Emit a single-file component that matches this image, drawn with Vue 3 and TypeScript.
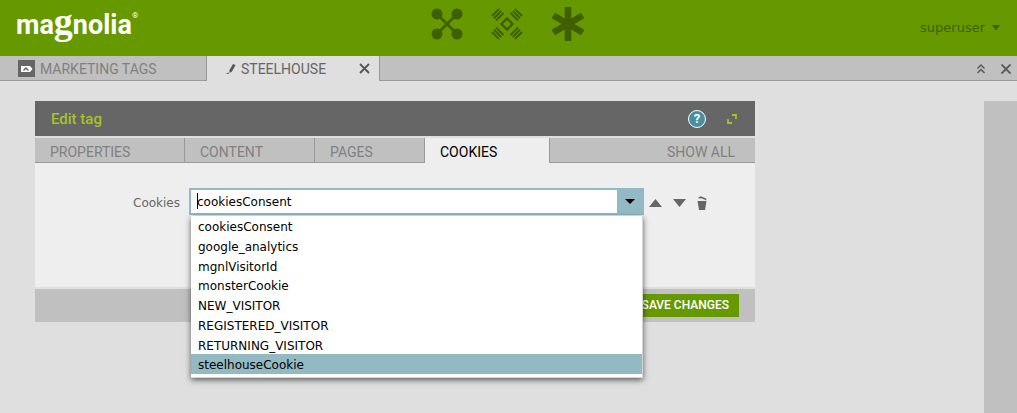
<script setup lang="ts">
import { ref } from 'vue'

const dialogTabs = ref([
  { label: 'PROPERTIES', kind: 'properties' },
  { label: 'CONTENT', kind: 'content' },
  { label: 'PAGES', kind: 'pages' },
  { label: 'COOKIES', kind: 'cookies' },
])
const activeTab = ref('cookies')

const cookies: string[] = [
  'cookiesConsent',
  'google_analytics',
  'mgnlVisitorId',
  'monsterCookie',
  'NEW_VISITOR',
  'REGISTERED_VISITOR',
  'RETURNING_VISITOR',
  'steelhouseCookie',
]
const value = ref('cookiesConsent')
const highlighted = ref('steelhouseCookie')
const open = ref(true)

function choose(name: string) {
  value.value = name
  open.value = false
}
</script>

<template>
  <div class="shell">
    <header class="topbar">
      <a class="logo" href="#" aria-label="magnolia"><span>ma</span><span class="logo-g">g</span><span>nolia</span><sup>®</sup></a>
      <nav class="launchers">
        <button type="button" aria-label="Apps">
          <svg width="32" height="32" viewBox="0 0 32 32">
            <g fill="#3f5f00">
              <circle cx="6" cy="6" r="5.5" /><circle cx="26" cy="6" r="5.5" />
              <circle cx="6" cy="26" r="5.5" /><circle cx="26" cy="26" r="5.5" />
            </g>
            <path d="M6 6L26 26M26 6L6 26" stroke="#3f5f00" stroke-width="2.600" />
          </svg>
        </button>
        <button type="button" aria-label="Pulse">
          <svg width="32" height="32" viewBox="0 0 32 32" fill="none" stroke="#3f5f00" stroke-width="2">
            <path d="M16 10.500L21.500 16L16 21.500L10.500 16Z" stroke-width="2.400" />
            <path d="M1 8L8 1M3 10.200L10.200 3M5 12.500L12.500 5" />
            <path d="M24 1L31 8M21.800 3L29 10.200M19.500 5L27 12.500" />
            <path d="M1 24L8 31M3 21.800L10.200 29M5 19.500L12.500 27" />
            <path d="M31 24L24 31M29 21.800L21.800 29M27 19.500L19.500 27" />
          </svg>
        </button>
        <button type="button" aria-label="Favorites">
          <svg width="34" height="34" viewBox="0 0 34 34" stroke="#3f5f00" stroke-width="6.600">
            <path d="M17 0V34M2.300 8.500L31.700 25.500M31.700 8.500L2.300 25.500" />
          </svg>
        </button>
      </nav>
      <button type="button" class="user">
        superuser
        <svg width="8" height="6" viewBox="0 0 8 6"><path d="M0 0H8L4 5.500Z" fill="#3f5f00" /></svg>
      </button>
    </header>

    <nav class="appbar">
      <button type="button" class="apptab tags">
        <svg width="17" height="17" viewBox="0 0 17 17">
          <rect width="17" height="17" fill="#666" />
          <path d="M3 6H12L14.500 9L12 12H3Z" fill="#fff" />
          <path d="M5.500 10.500L8 8L10.500 10.500" fill="none" stroke="#666" stroke-width="1.500" />
        </svg>
        MARKETING TAGS
      </button>
      <div class="apptab current">
        <button type="button" class="apptab-name">
          <svg width="11" height="12" viewBox="0 0 11 12">
            <path d="M8 1L10.500 2L7 8.500L4.500 10L4.500 7Z" fill="#555" />
            <path d="M0 11H4L3.500 9L2.500 10Z" fill="#777" />
          </svg>
          STEELHOUSE
        </button>
        <button type="button" class="close" aria-label="Close tab">
          <svg width="11" height="11" viewBox="0 0 11 11"><path d="M1 1L10 10M10 1L1 10" stroke="#555" stroke-width="1.800" /></svg>
        </button>
      </div>
      <div class="window-tools">
        <button type="button" aria-label="Collapse">
          <svg width="8" height="10" viewBox="0 0 8 10" fill="none" stroke="#555" stroke-width="1.400"><path d="M.5 4.500L4 1L7.500 4.500M.5 9L4 5.500L7.500 9" /></svg>
        </button>
        <button type="button" aria-label="Close">
          <svg width="10" height="10" viewBox="0 0 10 10"><path d="M.5 .5L9.500 9.500M9.500 .5L.5 9.500" stroke="#555" stroke-width="1.800" /></svg>
        </button>
      </div>
    </nav>

    <main class="workspace">
      <section class="dialog">
        <header class="dialog-head">
          <h1>Edit tag</h1>
          <button type="button" class="help" aria-label="Help">?</button>
          <button type="button" aria-label="Expand">
            <svg width="10" height="10" viewBox="0 0 10 10" fill="none" stroke="#a7c325" stroke-width="1.800"><path d="M5 1H9V5M1 5V9H5" /></svg>
          </button>
        </header>

        <div class="dialog-tabs" role="tablist">
          <button
            v-for="tab in dialogTabs"
            :key="tab.kind"
            type="button"
            role="tab"
            :aria-selected="tab.kind === activeTab"
            :class="['tab', tab.kind, { active: tab.kind === activeTab }]"
            @click="activeTab = tab.kind"
          >{{ tab.label }}</button>
          <button type="button" class="show-all">SHOW ALL</button>
        </div>

        <div class="dialog-body">
          <label for="cookie">Cookies</label>
          <div class="combo">
            <input id="cookie" v-model="value" type="text" role="combobox" :aria-expanded="open" aria-controls="cookie-list" autocomplete="off" spellcheck="false" />
            <span class="caret"></span>
            <button type="button" aria-label="Show options" @click="open = !open">
              <svg width="10" height="5" viewBox="0 0 10 5"><path d="M0 0H10L5 5Z" fill="#000" /></svg>
            </button>
            <ul v-if="open" id="cookie-list" class="options" role="listbox">
              <li
                v-for="name in cookies"
                :key="name"
                role="option"
                :aria-selected="name === highlighted"
                :class="{ hot: name === highlighted }"
                @mouseenter="highlighted = name"
                @click="choose(name)"
              >{{ name }}</li>
            </ul>
          </div>
          <div class="row-tools">
            <button type="button" aria-label="Move up"><svg width="13" height="8" viewBox="0 0 13 8"><path d="M0 8L6.500 0L13 8Z" fill="#666" /></svg></button>
            <button type="button" aria-label="Move down"><svg width="13" height="8" viewBox="0 0 13 8"><path d="M0 0H13L6.500 8Z" fill="#666" /></svg></button>
            <button type="button" aria-label="Delete">
              <svg width="10" height="14" viewBox="0 0 10 14" fill="#666"><path d="M.5 5H9.500L8 14H2Z" /><path d="M1.500 1.200L4 .2L9.500 2.700L9 4.200L4.500 2.200L1.800 2.400Z" /></svg>
            </button>
          </div>
        </div>

        <footer class="dialog-foot">
          <button type="button" class="save">SAVE CHANGES</button>
        </footer>
      </section>
      <aside class="side-strip"></aside>
    </main>
  </div>
</template>

<style>
body {
  margin: 0;
  background: #dfdfdf;
}
</style>

<style scoped>
.shell {
  min-height: 100vh;
  display: flex;
  flex-direction: column;
  background: #dfdfdf;
  color: #666;
  font: 12px/16px "DejaVu Sans", Verdana, sans-serif;
}
button {
  margin: 0;
  padding: 0;
  border: 0;
  background: none;
  color: inherit;
  font: inherit;
  cursor: pointer;
}
svg {
  display: block;
}
.topbar {
  display: grid;
  grid-template-columns: 1fr auto 1fr;
  align-items: center;
  height: 56px;
  padding: 0 17px 0 16px;
  box-sizing: border-box;
  background: #690;
}
.logo {
  display: flex;
  align-items: baseline;
  padding-bottom: 10px;
  color: #fff;
  font: bold 27px/42px Roboto, sans-serif;
  text-decoration: none;
}
.logo-g {
  font: bold 38px/42px "Liberation Serif", serif;
}
.logo sup {
  align-self: flex-start;
  padding-top: 10px;
  font: 8px/12px Roboto, sans-serif;
}
.launchers {
  display: flex;
  align-items: center;
  gap: 28px;
  padding-bottom: 8px;
}
.user {
  display: flex;
  align-items: center;
  justify-self: end;
  gap: 7px;
  color: #3f5f00;
  font-size: 13px;
}
.appbar {
  display: flex;
  height: 25px;
  background: #c0c0c0;
  box-shadow: inset 0 -1px #999;
}
.apptab {
  display: flex;
  align-items: center;
  box-sizing: border-box;
  border-right: 1px solid #999;
  font: 14px/16px Roboto, sans-serif;
}
.tags {
  width: 207px;
  gap: 5px;
  padding-left: 18px;
  color: #808080;
}
.current {
  width: 173px;
  justify-content: space-between;
  padding: 0 9px 0 18px;
  background: #dfdfdf;
}
.apptab-name {
  display: flex;
  align-items: center;
  gap: 5px;
}
.window-tools {
  display: flex;
  align-items: center;
  gap: 16px;
  margin-left: auto;
  padding-right: 6px;
}
.workspace {
  flex: 1;
  display: flex;
  justify-content: space-between;
  align-items: stretch;
  padding: 20px 0 0 35px;
}
.dialog {
  flex: 0 1 720px;
  align-self: flex-start;
  display: flex;
  flex-direction: column;
  gap: 2px;
}
.side-strip {
  width: 33px;
  background: #c0c0c0;
}
.dialog-head {
  display: flex;
  align-items: center;
  height: 35px;
  padding: 0 18px 0 16px;
  background: #666;
}
.dialog-head h1 {
  flex: 1;
  margin: 0;
  color: #a7c325;
  font: 500 15px/20px Roboto, sans-serif;
}
.help {
  width: 18px;
  height: 18px;
  margin-right: 21px;
  box-sizing: border-box;
  border: 1px solid #fff;
  border-radius: 50%;
  background: #4a8f9f;
  color: #fff;
  font: bold 13px/16px Roboto, sans-serif;
}
.dialog-tabs {
  display: flex;
  height: 25px;
  margin-bottom: -2px;
  background: #c0c0c0;
  box-shadow: inset 0 -1px #999;
  color: #808080;
  font: 14px/16px Roboto, sans-serif;
}
.tab {
  box-sizing: border-box;
  padding: 2px 0 0 15px;
  border-right: 1px solid #999;
  text-align: left;
}
.properties {
  width: 150px;
}
.content {
  width: 130px;
}
.pages {
  width: 110px;
}
.cookies {
  width: 125px;
}
.active {
  background: #eee;
  color: #000;
}
.show-all {
  margin-left: auto;
  padding: 2px 20px 0 0;
}
.dialog-body {
  display: flex;
  align-items: flex-start;
  min-height: 124px;
  box-sizing: border-box;
  padding: 25px 0 0;
  background: #eee;
}
.dialog-body label {
  width: 145px;
  padding: 7px 9px 0 0;
  text-align: right;
}
.combo {
  position: relative;
  display: flex;
  width: 455px;
  height: 27px;
  box-sizing: border-box;
  border: 2px solid #93bac3;
  background: #93bac3;
}
.combo input {
  flex: 1;
  min-width: 0;
  padding: 0 6px 0 6px;
  border: 0;
  outline: 0;
  background: #fff;
  color: #000;
  font: inherit;
}
.combo button {
  display: grid;
  place-items: center;
  width: 25px;
}
.caret {
  position: absolute;
  top: 3px;
  left: 6px;
  width: 1px;
  height: 16px;
  background: #000;
}
.options {
  position: absolute;
  top: 26px;
  left: 0;
  right: -1px;
  z-index: 1;
  display: grid;
  grid-auto-rows: 1fr;
  height: 158px;
  margin: 0;
  padding: 0 0 3px;
  border-right: 1px solid #d4d4d4;
  border-bottom: 1px solid #d4d4d4;
  background: #fff;
  box-shadow: 0 2px 6px rgba(0, 0, 0, 0.6);
  color: #000;
  list-style: none;
}
.options li {
  padding: 4px 7px 0;
  line-height: 15px;
}
.options .hot {
  background: #93bac3;
}
.row-tools {
  display: flex;
  align-items: center;
  gap: 11px;
  height: 30px;
  padding-left: 5px;
}
.dialog-foot {
  display: flex;
  justify-content: flex-end;
  padding: 5px 16px;
  background: #c0c0c0;
}
.save {
  padding: 0 10px;
  background: #690;
  color: #fff;
  font: 500 12px/23px Roboto, sans-serif;
}
</style>
